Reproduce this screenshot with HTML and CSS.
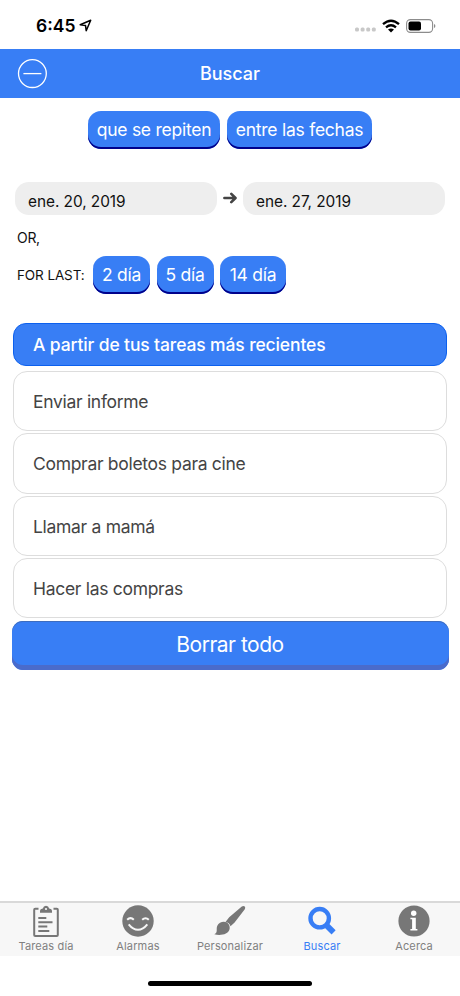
FILE: index.html
```
<!DOCTYPE html>
<html lang="es">
<head>
    <meta charset="UTF-8">
    <meta name="viewport" content="width=device-width, initial-scale=1.0">
    <title>Buscar</title>
    <link rel="stylesheet" href="styles.css">
</head>
<body>
    <div class="status-bar">
        <span class="time">6:45</span>
        <svg class="location" width="13" height="13" viewBox="0 0 13 13"><path d="M1.2 5.8 11.7 1.2 7.2 11.7 6.5 6.4Z" fill="none" stroke="#000" stroke-width="1.5" stroke-linejoin="round"/></svg>
        <div class="status-icons">
            <svg width="21" height="5" viewBox="0 0 21 5" fill="#c8c8c8"><rect x="0" y="0.5" width="4" height="4" rx="1.5"/><rect x="5.6" y="0.5" width="4" height="4" rx="1.5"/><rect x="11.2" y="0.5" width="4" height="4" rx="1.5"/><rect x="16.8" y="0.5" width="4" height="4" rx="1.5"/></svg>
            <svg class="wifi" width="18" height="14" viewBox="0 0 18 14"><path d="M1 5.2Q9-1.8 17 5.2M4 8.3Q9 4.2 14 8.3" fill="none" stroke="#000" stroke-width="2.3"/><path d="M6 10.6Q9 8.4 12 10.6L9 13.5Z"/></svg>
            <svg class="battery" width="30" height="14" viewBox="0 0 30 14"><rect x="0.6" y="0.6" width="26" height="12.8" rx="3.8" fill="none" stroke="#8c8c8c" stroke-width="1.1"/><rect x="2.5" y="2.5" width="12.5" height="9" rx="2"/><path d="M28 5v4Q29.4 8.5 29.4 7T28 5" fill="#8c8c8c"/></svg>
        </div>
    </div>

    <header>
        <svg class="menu" width="30" height="30" viewBox="0 0 30 30" fill="none" stroke="#fff" stroke-width="1.3"><circle cx="15.4" cy="14.6" r="13.9"/><path d="M6.4 14.6h18"/></svg>
        <h1>Buscar</h1>
    </header>

    <main>
        <div class="filters">
            <button class="btn repeat">que se repiten</button>
            <button class="btn between">entre las fechas</button>
        </div>

        <div class="dates">
            <div class="date">ene. 20, 2019</div>
            <svg width="14" height="12" viewBox="0 0 14 12" fill="none" stroke="#444" stroke-width="2.6" stroke-linecap="round" stroke-linejoin="round"><path d="M1.4 6h11M8.3 1.8 12.5 6 8.3 10.2"/></svg>
            <div class="date">ene. 27, 2019</div>
        </div>

        <p class="or">OR,</p>
        <div class="last">
            <span>FOR LAST:</span>
            <button class="btn days">2 día</button>
            <button class="btn days">5 día</button>
            <button class="btn days wide">14 día</button>
        </div>

        <h2>A partir de tus tareas más recientes</h2>
        <ul class="tasks">
            <li>Enviar informe</li>
            <li>Comprar boletos para cine</li>
            <li>Llamar a mamá</li>
            <li>Hacer las compras</li>
        </ul>
        <button class="clear">Borrar todo</button>
    </main>

    <nav>
        <a class="tab">
            <svg width="34" height="34" viewBox="0 0 34 34"><path d="M9.5 4.7H6.2Q5.2 4.7 5.2 5.7V31Q5.2 32 6.2 32H27.8Q28.8 32 28.8 31V5.7Q28.8 4.7 27.8 4.7H24.5" fill="none" stroke="#777" stroke-width="2"/><path d="M11 8.7V6.8Q11 4.8 13.8 4.5 14.5 1.8 17 1.8T20.2 4.5Q23 4.8 23 6.8V8.7Z" fill="#777"/><circle cx="17" cy="5" r="1.1" fill="#f7f7f7"/><path d="M9.3 14h8M9.3 18.3h14.2M9.3 22.6h9M9.3 27h11" stroke="#777" stroke-width="2"/></svg>
            <span>Tareas día</span>
        </a>
        <a class="tab">
            <svg width="34" height="34" viewBox="0 0 34 34"><circle cx="17" cy="17" r="15.7" fill="#777"/><path d="M6.2 15.8Q9.5 12.5 12.8 15.8M21.2 15.8Q24.5 12.5 27.8 15.8M7.7 20.3Q12 25.7 17 25.7T26.3 20.3" fill="none" stroke="#f7f7f7" stroke-width="2"/></svg>
            <span>Alarmas</span>
        </a>
        <a class="tab">
            <svg width="34" height="34" viewBox="0 0 34 34" fill="#777"><path d="M31.8 2.6Q30.5 1.3 28.8 2.6L16.2 13.3 12.5 18.1Q16.3 18.6 17.5 22.2L21.6 18.6 31.8 5.2Q32.7 3.7 31.8 2.6Z"/><path d="M10.8 17.7C14.8 17.7 17.4 21.2 16.6 25 15.3 30.5 7.5 32 1.3 30.3 5.3 28.5 2.8 25.3 4.3 21.8 5.5 19.2 8.2 17.7 10.8 17.7Z"/></svg>
            <span>Personalizar</span>
        </a>
        <a class="tab active">
            <svg width="34" height="34" viewBox="0 0 34 34" fill="none" stroke="#387ef5"><circle cx="14.7" cy="14.2" r="9.2" stroke-width="4.4"/><path d="M20.8 20.6 28.6 28.4" stroke-width="5.8"/></svg>
            <span>Buscar</span>
        </a>
        <a class="tab">
            <svg width="34" height="34" viewBox="0 0 34 34"><circle cx="17" cy="17" r="15.6" fill="#777"/><circle cx="16.7" cy="9.2" r="2.7" fill="#fff"/><path d="M13.4 13.7H18.8V25.1H20.4V26.6H13.4V25.1H15.1V15.2H13.4Z" fill="#fff"/></svg>
            <span>Acerca</span>
        </a>
    </nav>
    <div class="home-bar"></div>
</body>
</html>
```
FILE: styles.css
```
* {
    box-sizing: border-box;
}
body {
    margin: 0;
    height: 996px;
    display: flex;
    flex-direction: column;
    background-color: #fff;
    color: #111;
    font-family: Inter, Roboto, sans-serif;
}
button {
    border: 0;
    padding: 0;
    font-family: inherit;
    color: #fff;
    white-space: nowrap;
}
svg {
    display: block;
    flex-shrink: 0;
}
.status-bar {
    height: 49px;
    padding: 2px 24px 0 36px;
    display: flex;
    align-items: center;
}
.time {
    font-size: 17.5px;
    font-weight: 600;
    color: #000;
}
.location {
    margin-left: 4px;
}
.status-icons {
    margin-left: auto;
    display: flex;
    align-items: center;
}
.status-icons svg:first-child {
    margin-top: 8px;
}
.wifi {
    margin-left: 6px;
}
.battery {
    margin-left: 6px;
}
header {
    height: 49px;
    padding: 0 17px;
    display: grid;
    grid-template-columns: 30px 1fr 30px;
    align-items: center;
    background-color: #387ef5;
}
h1 {
    margin: 0;
    font-size: 18px;
    font-weight: 500;
    text-align: center;
    color: #fff;
}
main {
    flex: 1;
    padding: 13px 12px 0;
}
.filters {
    display: flex;
    justify-content: center;
    gap: 7px;
}
.btn {
    height: 38px;
    padding-bottom: 1px;
    border-radius: 13px;
    background-color: #387ef5;
    box-shadow: inset 0 -2px 0 #00008b;
    font-size: 17.5px;
    letter-spacing: -0.25px;
}
.repeat {
    width: 132px;
}
.between {
    width: 145px;
}
.dates {
    margin: 33px 3px 0;
    display: flex;
    align-items: center;
    gap: 6px;
}
.dates svg {
    margin-bottom: 2px;
}
.date {
    flex: 1;
    height: 33px;
    padding: 6px 13px 0;
    border-radius: 14px;
    background-color: #eee;
    font-size: 15.4px;
    line-height: 28px;
    letter-spacing: -0.05px;
}
.or {
    margin: 13px 5px 0;
    font-size: 14px;
    line-height: 20px;
    letter-spacing: -0.3px;
}
.last {
    margin: 8px 5px 0;
    display: flex;
    align-items: center;
    gap: 6.5px;
}
.last span {
    width: 69.5px;
    font-size: 13.5px;
    letter-spacing: -0.1px;
    white-space: nowrap;
}
.days {
    width: 57px;
}
.days.wide {
    width: 66px;
}
h2 {
    margin: 29px 1px 0;
    height: 43px;
    padding-left: 19px;
    border: 1px solid #0c60ee;
    border-radius: 13px;
    background-color: #387ef5;
    font-size: 17.5px;
    font-weight: 500;
    line-height: 42px;
    letter-spacing: -0.13px;
    color: #fff;
}
.tasks {
    margin: 5px 1px 0;
    padding: 0;
    list-style: none;
    display: grid;
    gap: 2px;
}
.tasks li {
    height: 60.3px;
    padding-left: 19px;
    border: 1px solid #ddd;
    border-radius: 14px;
    font-size: 17.5px;
    line-height: 59px;
    letter-spacing: -0.3px;
    color: #444;
}
.clear {
    display: block;
    width: 437px;
    height: 49px;
    margin: 3px 0 0 -0.5px;
    padding-bottom: 3px;
    border-radius: 11px;
    background-color: #387ef5;
    box-shadow: inset 0 1px 0 #3d6cbf, inset 0 -5px 0 #4a6bcb;
    font-size: 21px;
    letter-spacing: -0.5px;
}
nav {
    height: 55px;
    display: grid;
    grid-template-columns: repeat(5, 1fr);
    border-top: 2px solid #d9d9d9;
    background-color: #f7f7f7;
}
.tab {
    display: flex;
    flex-direction: column;
    align-items: center;
    padding-top: 1px;
    color: #808080;
    font-size: 11px;
    line-height: 17px;
    letter-spacing: 0.15px;
}
.tab.active {
    color: #387ef5;
}
.home-bar {
    width: 164px;
    height: 5px;
    margin: 25px auto 10px;
    border-radius: 3px;
    background-color: #000;
}
```
